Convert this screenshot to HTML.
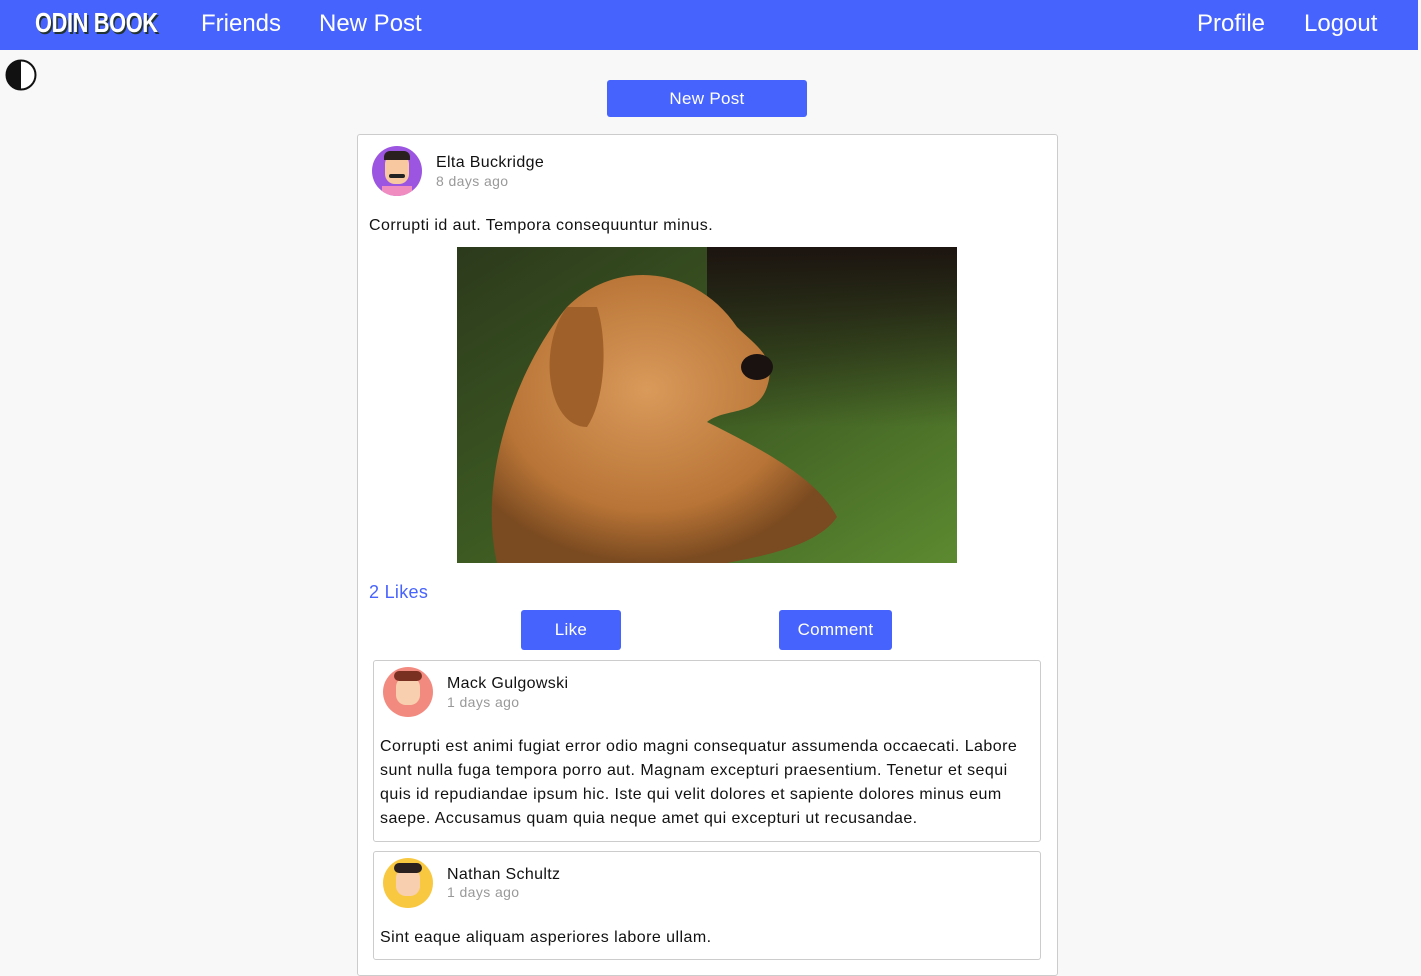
<!DOCTYPE html>
<html><head><style>
body{margin:0;background:#f8f8f8;font-family:"Liberation Sans",sans-serif;color:#111;width:1421px;height:964px;overflow:hidden;position:relative}
.nav{position:absolute;left:0;top:0;width:1418px;height:50px;background:#4763fe;color:#fff}
.nav span{position:absolute;top:10px;font-size:24px}
.logo{left:35px;top:7px!important;font-weight:bold;font-size:28px!important;letter-spacing:-0.5px;text-shadow:2px 2px 0 #233;transform:scaleX(0.78);transform-origin:left}
.btn{position:absolute;background:#4763fe;color:#fff;font-size:17px;text-align:center;border-radius:3px;letter-spacing:.3px}
.card{position:absolute;left:357px;top:134px;width:699px;height:840px;background:#fff;border:1px solid #ccc;border-radius:3px}
.av{position:absolute;width:50px;height:50px;border-radius:50%;overflow:hidden}
.name{position:absolute;font-size:16px;letter-spacing:.35px}
.ago{position:absolute;font-size:14px;color:#999;letter-spacing:.4px}
.cm{position:absolute;left:15px;width:666px;border:1px solid #ccc;border-radius:3px;background:#fff}
.t{position:absolute;font-size:16px;line-height:24px;letter-spacing:.45px}
</style></head><body>
<div class="nav">
<span class="logo">ODIN BOOK</span>
<span style="left:201px">Friends</span>
<span style="left:319px">New Post</span>
<span style="left:1197px">Profile</span>
<span style="left:1304px">Logout</span>
</div>
<svg style="position:absolute;left:5px;top:59px" width="32" height="32"><circle cx="16" cy="16" r="14.5" fill="#fff" stroke="#111" stroke-width="2"/><path d="M16 1.5A14.5 14.5 0 0 0 16 30.5Z" fill="#111"/></svg>
<div class="btn" style="left:607px;top:80px;width:200px;height:37px;line-height:37px">New Post</div>
<div class="card">
<div class="av" style="left:14px;top:11px;background:#9b55e0"><div style="position:absolute;left:13px;top:8px;width:24px;height:30px;background:#f8c8a0;border-radius:10px"></div><div style="position:absolute;left:12px;top:5px;width:26px;height:9px;background:#2a2020;border-radius:6px 6px 0 0"></div><div style="position:absolute;left:17px;top:28px;width:16px;height:4px;background:#222;border-radius:2px"></div><div style="position:absolute;left:10px;top:40px;width:30px;height:12px;background:#f08cc0"></div></div>
<div class="name" style="left:78px;top:19px">Elta Buckridge</div>
<div class="ago" style="left:78px;top:38px">8 days ago</div>
<div class="t" style="left:11px;top:79px">Corrupti id aut. Tempora consequuntur minus.</div>
<svg style="position:absolute;left:99px;top:112px" width="500" height="316">
<defs><linearGradient id="g" x1="0" y1="0" x2="1" y2="1"><stop offset="0" stop-color="#2c3a1c"/><stop offset=".5" stop-color="#3d5a22"/><stop offset="1" stop-color="#5c8a30"/></linearGradient>
<linearGradient id="k" x1="0" y1="0" x2="0" y2="1"><stop offset="0" stop-color="#1c1410"/><stop offset="1" stop-color="#1c1410" stop-opacity="0"/></linearGradient>
<radialGradient id="d" cx=".45" cy=".4" r=".6"><stop offset="0" stop-color="#d99a5a"/><stop offset=".7" stop-color="#b87436"/><stop offset="1" stop-color="#7a4a20"/></radialGradient></defs>
<rect width="500" height="316" fill="url(#g)"/>
<rect x="250" width="250" height="180" fill="url(#k)"/>
<path d="M40 316 C20 230 60 120 110 60 C160 10 240 20 280 80 C300 100 320 110 310 140 C300 170 270 160 250 175 C300 200 360 230 380 270 C360 300 300 310 270 316Z" fill="url(#d)"/>
<ellipse cx="300" cy="120" rx="16" ry="13" fill="#1a1210"/>
<path d="M110 60 C80 100 90 180 130 180 C150 150 150 90 140 60Z" fill="#a0602a"/>
</svg>
<div style="position:absolute;left:11px;top:447px;font-size:18px;color:#4763fe;letter-spacing:.3px">2 Likes</div>
<div class="btn" style="left:163px;top:475px;width:100px;height:40px;line-height:40px">Like</div>
<div class="btn" style="left:421px;top:475px;width:113px;height:40px;line-height:40px">Comment</div>
<div class="cm" style="top:525px;height:180px">
<div class="av" style="left:9px;top:6px;background:#f28a80"><div style="position:absolute;left:13px;top:10px;width:24px;height:28px;background:#f8d0b0;border-radius:10px"></div><div style="position:absolute;left:11px;top:4px;width:28px;height:10px;background:#7a3020;border-radius:8px"></div></div>
<div class="name" style="left:73px;top:14px">Mack Gulgowski</div>
<div class="ago" style="left:73px;top:33px">1 days ago</div>
<div class="t" style="left:6px;top:74px;width:650px">Corrupti est animi fugiat error odio magni consequatur assumenda occaecati. Labore sunt nulla fuga tempora porro aut. Magnam excepturi praesentium. Tenetur et sequi quis id repudiandae ipsum hic. Iste qui velit dolores et sapiente dolores minus eum saepe. Accusamus quam quia neque amet qui excepturi ut recusandae.</div>
</div>
<div class="cm" style="top:716px;height:107px">
<div class="av" style="left:9px;top:6px;background:#f8c840"><div style="position:absolute;left:13px;top:10px;width:24px;height:28px;background:#f8d0b0;border-radius:10px"></div><div style="position:absolute;left:11px;top:5px;width:28px;height:10px;background:#2a2020;border-radius:8px"></div></div>
<div class="name" style="left:73px;top:14px">Nathan Schultz</div>
<div class="ago" style="left:73px;top:32px">1 days ago</div>
<div class="t" style="left:6px;top:74px">Sint eaque aliquam asperiores labore ullam.</div>
</div>
</div>
</body></html>
